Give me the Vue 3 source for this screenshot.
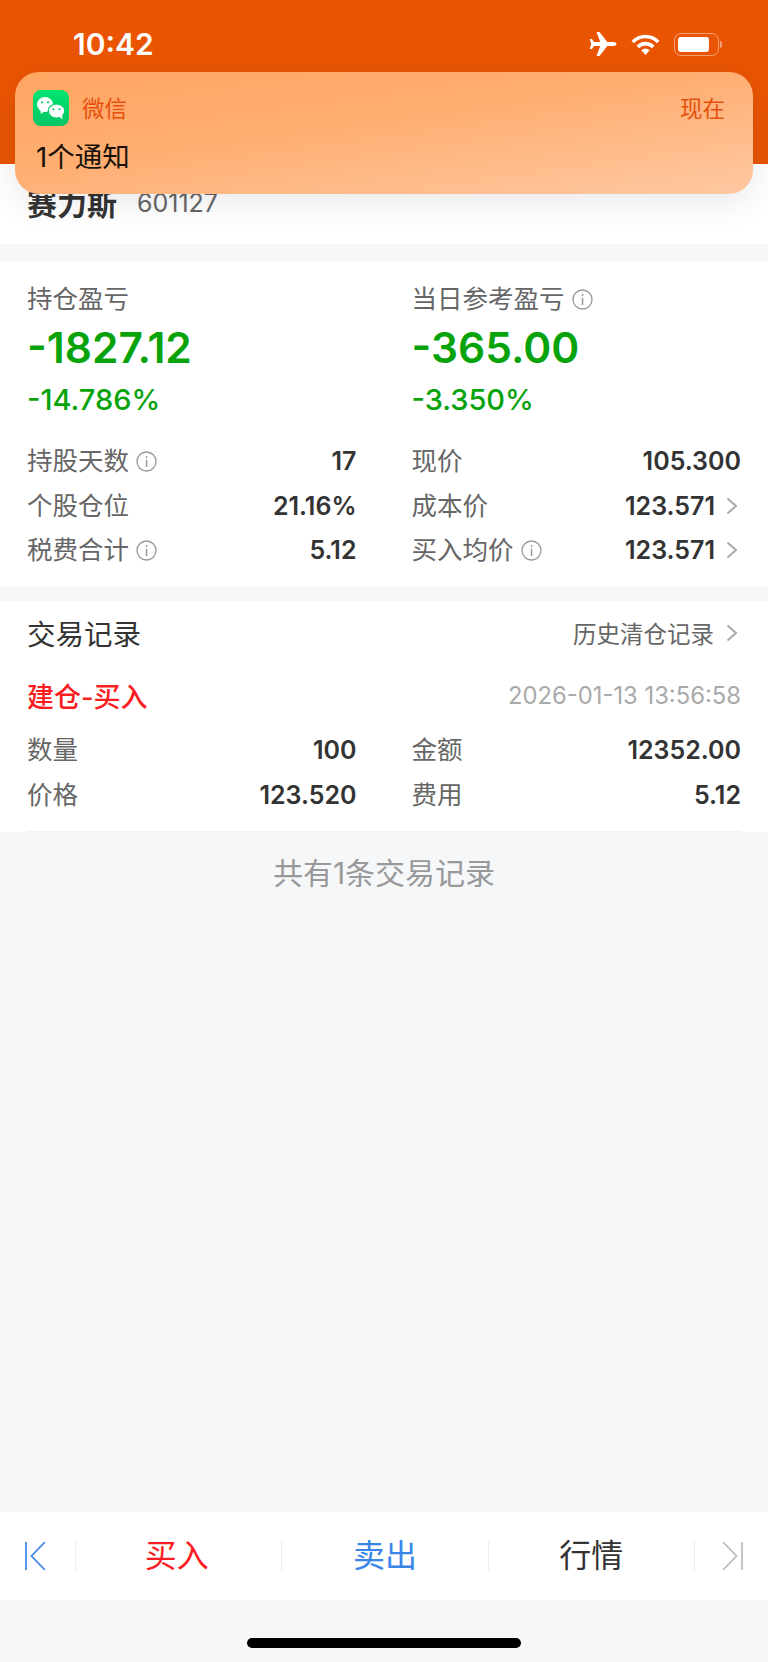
<script setup>
const summary = [
  { label: '持仓盈亏', value: '-1827.12', pct: '-14.786%', info: false },
  { label: '当日参考盈亏', value: '-365.00', pct: '-3.350%', info: true },
]

const stats = [
  { label: '持股天数', value: '17', info: true },
  { label: '现价', value: '105.300' },
  { label: '个股仓位', value: '21.16%' },
  { label: '成本价', value: '123.571', more: true },
  { label: '税费合计', value: '5.12', info: true },
  { label: '买入均价', value: '123.571', info: true, more: true },
]

const trade = [
  { label: '数量', value: '100' },
  { label: '金额', value: '12352.00' },
  { label: '价格', value: '123.520' },
  { label: '费用', value: '5.12' },
]
</script>

<template>
  <div class="page">
    <header class="top">
      <span class="time">10:42</span>
      <div class="status-icons">
        <svg class="plane" viewBox="0 0 28 24" width="28" height="24">
          <path fill="#fff" d="M27.5 12c0-1.2-1.5-2-3-2H18.300L10.500 0H7.500L11.300 10H5.200L2.800 7H.8L2.200 12 .8 17H2.800L5.200 14H11.300L7.500 24H10.500L18.300 14H24.500C26 14 27.500 13.200 27.500 12Z" />
        </svg>
        <svg class="wifi" viewBox="0 0 29 21" width="29" height="21">
          <g fill="none" stroke="#fff" stroke-width="3.600">
            <path d="M1.800 8A17.500 17.500 0 0 1 27.200 8" />
            <path d="M6.800 13A10.500 10.500 0 0 1 22.200 13" />
          </g>
          <path fill="#fff" d="M14.500 21 10.300 16.200A6.200 6.200 0 0 1 18.700 16.200Z" />
        </svg>
        <div class="battery">
          <div class="battery-body"><div class="battery-fill"></div></div>
          <div class="battery-nub"></div>
        </div>
      </div>
    </header>

    <div class="notice">
      <div class="notice-head">
        <svg class="wechat" viewBox="0 0 36 36" width="36" height="36">
          <defs>
            <linearGradient id="wx" x1="0" y1="0" x2="0" y2="1">
              <stop offset="0" stop-color="#02e56f" />
              <stop offset="1" stop-color="#05c566" />
            </linearGradient>
          </defs>
          <rect width="36" height="36" rx="8" fill="url(#wx)" />
          <ellipse cx="12" cy="14.500" rx="8" ry="7.500" fill="#fff" />
          <path fill="#fff" d="M7.500 19 7.800 24 12 21Z" />
          <g fill="#fff" stroke="#04d068" stroke-width="1.200">
            <ellipse cx="23.500" cy="21" rx="8.300" ry="7" />
          </g>
          <path fill="#fff" d="M26 26.500 29.500 29.500 29 24Z" />
          <g fill="#05c566">
            <circle cx="9" cy="12.300" r="1.100" />
            <circle cx="15" cy="12.300" r="1.100" />
            <circle cx="20.500" cy="19.300" r="1" />
            <circle cx="26.500" cy="19.300" r="1" />
          </g>
        </svg>
        <span class="notice-app">微信</span>
        <span class="notice-time">现在</span>
      </div>
      <div class="notice-text">1个通知</div>
    </div>

    <section class="stock">
      <span class="stock-name">赛力斯</span>
      <span class="stock-code">601127</span>
    </section>

    <section class="card holdings">
      <div class="grid summary">
        <div v-for="item in summary" :key="item.label">
          <div class="label">
            {{ item.label }}
            <svg v-if="item.info" class="info" viewBox="0 0 21 21" width="21" height="21">
              <circle cx="10.500" cy="10.500" r="9.500" fill="none" stroke="#999" stroke-width="1.300" />
              <rect x="9.800" y="8.800" width="1.500" height="7.200" fill="#999" />
              <rect x="9.800" y="5.200" width="1.500" height="1.800" fill="#999" />
            </svg>
          </div>
          <div class="big">{{ item.value }}</div>
          <div class="pct">{{ item.pct }}</div>
        </div>
      </div>
      <div class="grid rows stat-rows">
        <div v-for="row in stats" :key="row.label" class="row">
          <span class="label">
            {{ row.label }}
            <svg v-if="row.info" class="info" viewBox="0 0 21 21" width="21" height="21">
              <circle cx="10.500" cy="10.500" r="9.500" fill="none" stroke="#999" stroke-width="1.300" />
              <rect x="9.800" y="8.800" width="1.500" height="7.200" fill="#999" />
              <rect x="9.800" y="5.200" width="1.500" height="1.800" fill="#999" />
            </svg>
          </span>
          <span class="value">
            {{ row.value }}
            <svg v-if="row.more" class="chev" viewBox="0 0 12 18" width="12" height="18">
              <path d="M1.500 1.500 10 9 1.500 16.500" fill="none" stroke="#aaa" stroke-width="2" />
            </svg>
          </span>
        </div>
      </div>
    </section>

    <section class="card trades">
      <div class="trades-head">
        <span class="trades-title">交易记录</span>
        <span class="trades-link">
          历史清仓记录
          <svg class="chev" viewBox="0 0 12 18" width="12" height="18">
            <path d="M1.500 1.500 10 9 1.500 16.500" fill="none" stroke="#aaa" stroke-width="2" />
          </svg>
        </span>
      </div>
      <div class="trade-line">
        <span class="trade-type">建仓-买入</span>
        <span class="trade-date">2026-01-13 13:56:58</span>
      </div>
      <div class="grid rows trade-rows">
        <div v-for="row in trade" :key="row.label" class="row">
          <span class="label">{{ row.label }}</span>
          <span class="value">{{ row.value }}</span>
        </div>
      </div>
      <div class="rule"></div>
    </section>

    <div class="count">共有1条交易记录</div>

    <nav class="actions">
      <div class="nav-cell first">
        <svg viewBox="0 0 21 28" width="21" height="28">
          <path d="M1 0V28M20 0 6.500 14 20 28" fill="none" stroke="#3a86e8" stroke-width="1.700" />
        </svg>
      </div>
      <div class="action buy"><span>买入</span></div>
      <div class="action sell"><span>卖出</span></div>
      <div class="action quote"><span>行情</span></div>
      <div class="nav-cell last">
        <svg viewBox="0 0 21 28" width="21" height="28">
          <path d="M20 0V28M1 0 14.500 14 1 28" fill="none" stroke="#bbb" stroke-width="1.700" />
        </svg>
      </div>
    </nav>

    <div class="home"><div class="home-bar"></div></div>
  </div>
</template>

<style>
html,
body {
  margin: 0;
  background: #f6f7f9;
}
</style>

<style scoped>
.page {
  position: relative;
  width: 768px;
  height: 1662px;
  display: flex;
  flex-direction: column;
  overflow: hidden;
  background: #f6f7f9;
  font-family: Inter, "Noto Sans CJK SC", sans-serif;
  color: #333;
}

.top {
  height: 164px;
  flex: none;
  box-sizing: border-box;
  padding: 25px 46px 0 73px;
  display: flex;
  justify-content: space-between;
  align-items: flex-start;
  background: #ea5503;
  color: #fff;
}

.time {
  font-size: 30px;
  font-weight: 600;
  line-height: 38px;
}

.status-icons {
  display: flex;
  align-items: center;
  gap: 14px;
  padding-top: 7px;
}

.battery {
  display: flex;
  align-items: center;
  gap: 1px;
}

.battery-body {
  width: 45px;
  height: 23px;
  box-sizing: border-box;
  padding: 3px 9px 3px 3px;
  border: 1.500px solid rgba(255, 255, 255, 0.45);
  border-radius: 7px;
}

.battery-fill {
  height: 100%;
  background: #fff;
  border-radius: 3px;
}

.battery-nub {
  width: 2px;
  height: 7px;
  background: rgba(255, 255, 255, 0.45);
  border-radius: 0 2px 2px 0;
}

.notice {
  position: absolute;
  left: 15px;
  top: 72px;
  width: 738px;
  height: 122px;
  box-sizing: border-box;
  padding: 18px 28px 0 18px;
  border-radius: 24px;
  background: linear-gradient(172deg, #ffa662 0%, #ffae72 45%, #ffc8a2 100%);
  box-shadow: 0 6px 36px rgba(0, 0, 0, 0.1);
}

.notice-head {
  display: flex;
  align-items: center;
  height: 36px;
}

.wechat {
  flex: none;
}

.notice-app {
  margin-left: 13px;
  padding-bottom: 3px;
  font-size: 22.500px;
  color: #e6500c;
}

.notice-time {
  margin-left: auto;
  padding-bottom: 3px;
  font-size: 22.500px;
  color: #e6500c;
}

.notice-text {
  margin: 14px 0 0 3px;
  font-size: 27.500px;
  line-height: 34px;
  color: #1a1208;
}

.stock {
  height: 80px;
  flex: none;
  box-sizing: border-box;
  padding: 0 27px;
  display: flex;
  align-items: center;
  gap: 20px;
  background: #fff;
}

.stock-name {
  font-size: 30px;
  font-weight: 600;
  margin-bottom: 5px;
}

.stock-code {
  font-size: 25px;
  color: #666;
  margin-bottom: 2px;
}

.card {
  background: #fff;
  box-sizing: border-box;
  padding: 0 27px;
  flex: none;
}

.holdings {
  margin-top: 18px;
  height: 324px;
  padding-top: 19px;
}

.grid {
  display: grid;
  grid-template-columns: 1fr 1fr;
  column-gap: 55px;
}

.label {
  display: inline-flex;
  align-items: center;
  gap: 7px;
  font-size: 25.500px;
  line-height: 36px;
  color: #666;
}

.big {
  margin-top: 2px;
  font-size: 42.500px;
  line-height: 58px;
  font-weight: 600;
  color: #08a30a;
}

.pct {
  margin-top: 4px;
  font-size: 29px;
  line-height: 38px;
  font-weight: 500;
  color: #08a30a;
}

.rows {
  row-gap: 8.500px;
}

.stat-rows {
  margin-top: 24px;
}

.row {
  display: flex;
  align-items: center;
  justify-content: space-between;
  height: 36px;
}

.value {
  display: inline-flex;
  align-items: center;
  gap: 11px;
  font-size: 25px;
  font-weight: 600;
  color: #333;
}

.value .chev {
  margin-right: 3px;
}

.trades-link .chev {
  margin-right: 3px;
}

.trades {
  margin-top: 15px;
  height: 231px;
}

.trades-head {
  display: flex;
  align-items: center;
  justify-content: space-between;
  height: 63px;
}

.trades-title {
  font-size: 28.500px;
  color: #333;
}

.trades-link {
  display: inline-flex;
  align-items: center;
  gap: 12px;
  font-size: 23.500px;
  color: #666;
}

.trade-line {
  display: flex;
  align-items: center;
  justify-content: space-between;
  height: 36px;
  margin-top: 13px;
}

.trade-type {
  font-size: 27px;
  font-weight: 500;
  color: #fb1c22;
}

.trade-date {
  font-size: 23.800px;
  color: #aaa;
}

.trade-rows {
  margin-top: 19px;
}

.rule {
  height: 1px;
  margin-top: 18px;
  background: #f3f3f3;
}

.count {
  flex: 1;
  padding-top: 23px;
  text-align: center;
  font-size: 30px;
  line-height: 36px;
  color: #999;
}

.actions {
  flex: none;
  height: 88px;
  display: flex;
  align-items: center;
  background: #fff;
}

.nav-cell {
  display: flex;
  align-items: center;
  height: 30px;
  box-sizing: border-box;
}

.nav-cell.first {
  width: 75px;
  padding-left: 25px;
}

.nav-cell.last {
  width: 74px;
  padding-left: 27px;
  border-left: 1px solid #eee;
}

.action {
  flex: 1;
  height: 30px;
  display: flex;
  align-items: center;
  justify-content: center;
  box-sizing: border-box;
  border-left: 1px solid #eee;
  font-size: 32px;
}

.action span {
  position: relative;
  top: -3px;
}

.buy {
  color: #fb1c22;
}

.buy span {
  left: -2px;
}

.sell {
  color: #3a86e8;
}

.quote {
  color: #333;
}

.home {
  flex: none;
  height: 62px;
  display: flex;
  justify-content: center;
  padding-top: 38px;
  box-sizing: border-box;
}

.home-bar {
  width: 274px;
  height: 10px;
  border-radius: 5px;
  background: #000;
}
</style>
